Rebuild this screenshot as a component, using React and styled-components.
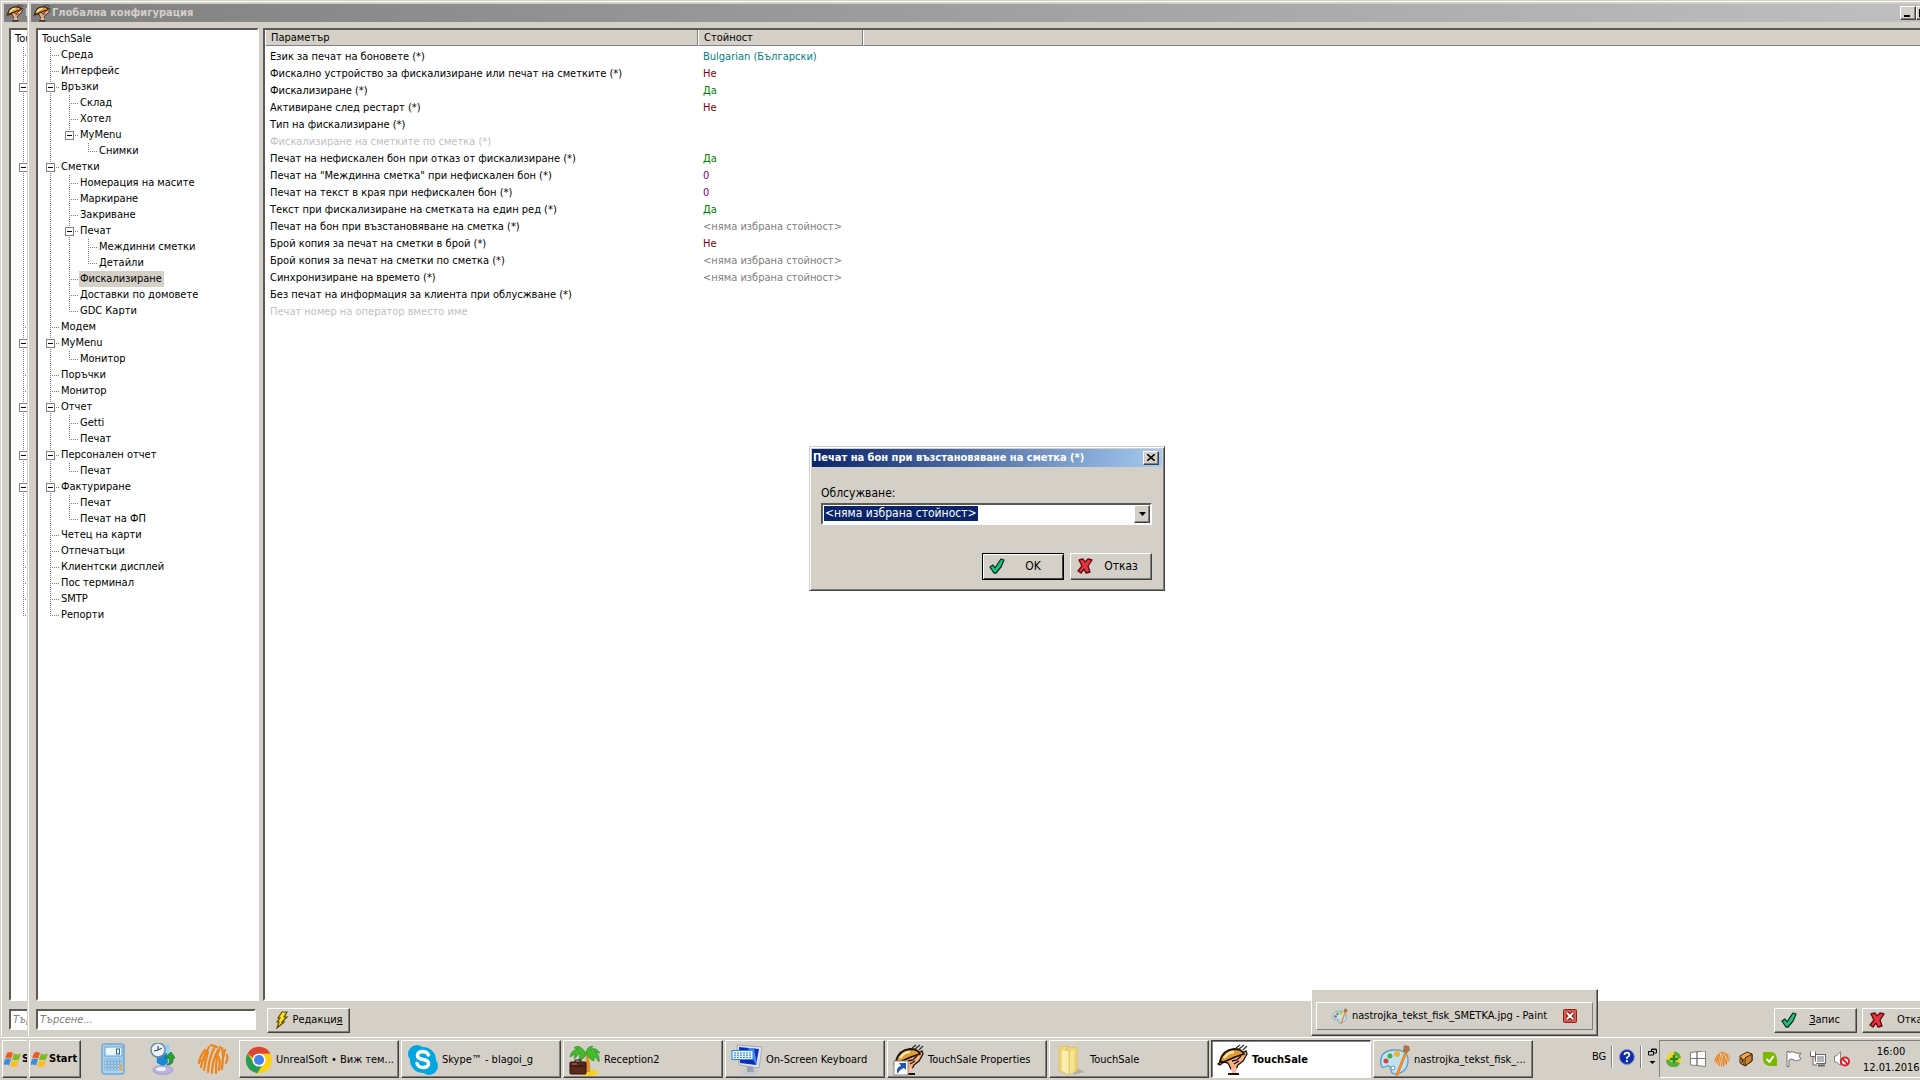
import * as React from 'react'
import styled, { createGlobalStyle, css } from 'styled-components'

const GlobalStyle = createGlobalStyle`
  * {
    box-sizing: border-box;
  }
  body {
    margin: 0;
    overflow: hidden;
    background: #d4d0c8;
    color: #000;
    font-family: 'DejaVu Sans Condensed', 'DejaVu Sans', sans-serif;
    font-size: 11px;
    line-height: 16px;
  }
  button, input, select {
    font: inherit;
    color: inherit;
  }
`

const raised = css`
  border: 1px solid;
  border-color: #fff #404040 #404040 #fff;
  box-shadow: inset -1px -1px 0 #808080;
`

const sunken = css`
  border: 2px solid;
  border-color: #5c5a56 #fff #fff #5c5a56;
  background: #fff;
`

const Desktop = styled.div`
  display: flex;
  min-height: 100vh;
  overflow: hidden;
`

const Sliver = styled.div`
  flex: 0 0 27px;
  display: flex;
  overflow: hidden;
`

const Screen = styled.div`
  flex: 0 0 ${(p) => (p.$narrow ? '300px' : '100vw')};
  display: flex;
  flex-direction: column;
`

const WindowArea = styled.div`
  position: relative;
  flex: 1;
  display: flex;
`

const Window = styled.section`
  flex: 0 0 calc(100% + 8px);
  display: flex;
  flex-direction: column;
  padding: 3px 2px 0 3px;
  border: 1px solid #d4d0c8;
  border-bottom: 0;
  box-shadow: inset 1px 1px 0 #fff;
`

const TitleBar = styled.header`
  display: flex;
  align-items: center;
  height: 18px;
  padding: 0 2px;
  background: linear-gradient(90deg, #808080, #c0c0c0);
  color: #d4d0c8;
`

const Title = styled.h1`
  flex: 1;
  margin: 0;
  padding-left: 1px;
  font-size: 11px;
  font-weight: bold;
  white-space: nowrap;
`

const CaptionButton = styled.button`
  ${raised}
  display: flex;
  align-items: center;
  justify-content: center;
  width: 16px;
  height: 14px;
  margin-left: ${(p) => (p.$apart ? '2px' : 0)};
  padding: 0;
  background: #d4d0c8;
  color: #000;
`

const Columns = styled.div`
  flex: 1;
  display: flex;
  gap: 4px;
  padding: 6px 5px 0;
`

const Side = styled.div`
  flex: 0 0 223px;
  display: flex;
  flex-direction: column;
`

const Main = styled.div`
  flex: 1;
  display: flex;
  flex-direction: column;
`

const Tree = styled.ul`
  ${sunken}
  flex: 1;
  margin: 0;
  padding: 1px 3px;
  list-style: none;
`

const TreeRow = styled.li`
  display: flex;
  height: 16px;
  white-space: nowrap;
`

const Guide = styled.svg`
  flex: none;
  width: 19px;
  height: 16px;
`

const TreeLabel = styled.span`
  padding: 0 2px 0 1px;
  background: ${(p) => (p.$selected ? '#d4d0c8' : 'transparent')};
`

const Footer = styled.div`
  display: flex;
  align-items: center;
  height: 35px;
  padding: ${(p) => p.$pad || 0};
`

const Search = styled.input`
  ${sunken}
  width: 220px;
  height: 21px;
  padding: 0 2px;
  font-style: italic;
  &::placeholder {
    color: #808080;
    opacity: 1;
  }
`

const GridBox = styled.div`
  ${sunken}
  flex: 1;
`

const Grid = styled.table`
  width: 100%;
  table-layout: fixed;
  border-collapse: separate;
  border-spacing: 0;
  text-align: left;
  white-space: nowrap;

  th {
    height: 16px;
    padding: 1px 5px 0;
    line-height: 14px;
    font-weight: normal;
    background: #d4d0c8;
    border: 1px solid;
    border-color: #d4d0c8 #808080 #808080 #fff;
    border-top: 0;
  }
  td {
    height: 17px;
    padding: 0 5px;
    line-height: 17px;
  }
  tbody tr:first-child td {
    height: 19px;
    padding-top: 2px;
  }
`

const Name = styled.td`
  color: ${(p) => (p.$disabled ? '#c0c0c0' : '#000')};
`

const valueColors = {
  lang: '#008080',
  no: '#800000',
  yes: '#008000',
  number: '#800080',
  empty: '#808080',
}

const Value = styled.td`
  color: ${(p) => valueColors[p.$kind] || '#000'};
`

const ActionButton = styled.button`
  ${raised}
  display: flex;
  align-items: center;
  width: 83px;
  height: 25px;
  padding: 0 4px 0 6px;
  background: #d4d0c8;
  white-space: nowrap;
  span {
    flex: 1;
    text-align: center;
  }
`

const Spacer = styled.div`
  flex: 1;
`

const Overlay = styled.div`
  position: absolute;
  inset: 0;
  display: flex;
  align-items: center;
  justify-content: center;
`

const Dialog = styled.section`
  width: 356px;
  padding: 2px;
  border: 1px solid;
  border-color: #d4d0c8 #404040 #404040 #d4d0c8;
  box-shadow: inset 1px 1px 0 #fff, inset -1px -1px 0 #808080;
  background: #d4d0c8;
`

const DialogTitle = styled.header`
  display: flex;
  align-items: center;
  height: 18px;
  padding: 0 3px 0 0;
  background: linear-gradient(90deg, #0a246a, #a6caf0);
  color: #fff;
`

const DialogForm = styled.form`
  padding: 18px 9px 8px;
  font-size: 12px;
`

const DialogLabel = styled.label`
  display: block;
  height: 18px;
`

const Combo = styled.div`
  ${sunken}
  display: flex;
  align-items: center;
  width: 331px;
  height: 22px;
  padding-left: 1px;
`

const ComboSelect = styled.select`
  appearance: none;
  height: 15px;
  padding: 0 1px;
  border: 0;
  background: #0a246a;
  color: #fff;
  line-height: 15px;
`

const ComboArrow = styled.span`
  ${raised}
  display: flex;
  align-items: center;
  justify-content: center;
  width: 16px;
  height: 18px;
  margin-left: auto;
  background: #d4d0c8;
`

const DialogButtons = styled.div`
  display: flex;
  justify-content: flex-end;
  gap: 6px;
  padding: 28px 1px 0 0;
`

const DialogButton = styled(ActionButton)`
  width: 82px;
  height: 27px;
  padding-right: 2px;
  ${(p) =>
    p.$primary &&
    css`
      border-color: #000;
      box-shadow: inset 1px 1px 0 #fff, inset -1px -1px 0 #404040;
    `}
`

const Taskbar = styled.footer`
  display: flex;
  height: 44px;
  padding: 3px 2px 2px;
  border-top: 1px solid #d4d0c8;
  box-shadow: inset 0 1px 0 #fff;
`

const StartButton = styled.button`
  ${raised}
  display: flex;
  align-items: center;
  width: 52px;
  height: 38px;
  padding: 0 1px;
  background: #d4d0c8;
  font-weight: bold;
`

const QuickLaunch = styled.nav`
  display: flex;
  gap: 18px;
  padding: 3px 10px 0 16px;
  height: 38px;
`

const IconLink = styled.a`
  display: block;
  width: 32px;
  height: 32px;
`

const Tasks = styled.nav`
  flex: 1;
  display: flex;
  gap: 2px;
`

const Task = styled.button`
  ${raised}
  flex: 1;
  min-width: 0;
  display: flex;
  align-items: center;
  gap: 3px;
  height: 38px;
  padding: 1px 4px 0 5px;
  background: #d4d0c8;
  white-space: nowrap;
  ${(p) =>
    p.$active &&
    css`
      border-color: #404040 #fff #fff #404040;
      box-shadow: inset 1px 1px 0 #808080;
      background: #fff;
      font-weight: bold;
    `}
`

const Tools = styled.div`
  display: flex;
  align-items: center;
  width: 126px;
  padding: 0 2px 4px 59px;
`

const Divider = styled.div`
  width: 2px;
  height: 22px;
  margin: 0 6px 0 5px;
  border-left: 1px solid #808080;
  border-right: 1px solid #fff;
`

const Tray = styled.div`
  display: flex;
  align-items: center;
  gap: 8px;
  width: 286px;
  height: 38px;
  padding-left: 6px;
  border: 1px solid;
  border-color: #808080 #fff #fff #808080;
`

const Clock = styled.time`
  width: 56px;
  margin-left: 5px;
  padding-top: 1px;
  text-align: center;
`

const Preview = styled.div`
  ${raised}
  position: absolute;
  right: 349px;
  bottom: 0;
  width: 287px;
  height: 47px;
  padding: 12px 4px 6px;
  background: #d4d0c8;
`

const PreviewItem = styled.div`
  display: flex;
  align-items: center;
  gap: 4px;
  height: 28px;
  padding: 0 15px;
  border: 1px solid;
  border-color: #fff #808080 #808080 #fff;
  white-space: nowrap;
`

const PreviewClose = styled.button`
  display: flex;
  width: 14px;
  height: 14px;
  margin-left: auto;
  padding: 0;
  border: 0;
  background: none;
`

/* ---- icons ---- */

const Cloche = ({ size }) => (
  <svg width={size} height={size} viewBox="0 0 32 32">
    <path d="M1 20q4-4 10-4l9-4 9-5 1 3-4 7-5 4-2 4h-5l-3-6-4-1-4 3z" fill="#f7b184" stroke="#1d1208" strokeWidth="1.300" />
    <path d="M3 17Q6 6 17 5q8 0 10 5l-9 3-9 4q-4 2-6 0z" fill="#e39a35" stroke="#1d1208" strokeWidth="1.800" />
    <path d="M7 14q4-6 10-6" stroke="#ffe9a8" strokeWidth="2.500" fill="none" />
    <path d="M15 17l5-1 4-4M17 20l5-3" stroke="#1d1208" strokeWidth="1.300" fill="none" />
    <path d="M14 24h6l-1 5h-4z" fill="#f7b9ac" />
    <path d="M11 29h11v2H11z" fill="#1d1208" />
    <path d="M19 4l4-3M22 5l5-4M26 6l4-4" stroke="#333" strokeWidth="1.300" />
  </svg>
)

const Check = () => (
  <svg width="16" height="16" viewBox="0 0 16 16">
    <path d="M1 9l3-2 2 3 6-9 3 1-3 7-5 6H5z" fill="#1fc584" stroke="#06301f" strokeWidth="1.300" strokeLinejoin="round" />
  </svg>
)

const Cross = () => (
  <svg width="16" height="16" viewBox="0 0 16 16">
    <path d="M2 2l4-1 2 3 3-3 4 1-4 6 2 6-4 1-2-4-3 4-3-2 4-5z" fill="#e8343c" stroke="#5a090e" strokeWidth="1.300" strokeLinejoin="round" />
  </svg>
)

const Bolt = () => (
  <svg width="16" height="18" viewBox="0 0 16 18">
    <path d="M8 1h5l-3 5h3L8 11h2l-7 6 2-6H3l3-4H4z" fill="#ffe21c" stroke="#5c4a00" strokeWidth="1.200" />
  </svg>
)

const Flag = () => (
  <svg width="18" height="18" viewBox="0 0 18 18">
    <path d="M3 3q3-2 6 0L7 9Q5 7 1 8.500z" fill="#ef5a28" />
    <path d="M10 3.500q3 2 7 0l-2 6q-3 1.500-7 0z" fill="#7fba26" />
    <path d="M1 9.500q3-2 6 0l-2 6q-3-2-6 0z" fill="#3b8ede" />
    <path d="M8 10.500q3 2 7 0l-2 6q-4 1-7-.500z" fill="#fdbf14" />
  </svg>
)

const Calculator = () => (
  <svg width="32" height="32" viewBox="0 0 32 32">
    <rect x="5" y="1" width="22" height="30" rx="2" fill="#a9d3f1" stroke="#4b8fc4" />
    <rect x="8" y="4" width="17" height="9" fill="#eaf6ff" stroke="#5e9fd0" />
    <rect x="19.500" y="6" width="3" height="5" fill="none" stroke="#36618a" />
    {[16, 19, 22, 25].map((y) =>
      [8, 11, 14, 17, 20, 23].map((x) => (
        <rect key={`${x}-${y}`} x={x} y={y} width="2" height="2" fill={x === 23 && y > 20 ? '#f0a030' : '#fff'} stroke={x === 23 && y > 20 ? '#f0a030' : '#3f83b9'} strokeWidth=".5" />
      ))
    )}
  </svg>
)

const Recovery = () => (
  <svg width="32" height="32" viewBox="0 0 32 32">
    <ellipse cx="16" cy="27" rx="10" ry="4.500" fill="#b9b5dc" stroke="#8c88b8" strokeWidth=".6" />
    <ellipse cx="14" cy="26" rx="5" ry="2" fill="#efeefa" />
    <path d="M8 4l14-3 2 18-7 4-8-3z" fill="#8ed3f4" />
    <path d="M10 13l10-3 1 10-5 3-6-3z" fill="#1f86d4" />
    <circle cx="11" cy="7" r="7" fill="#e9f4f8" stroke="#6d8a99" strokeWidth="1.500" />
    <path d="M11 3v4l-4 1M11 7l4-2" stroke="#333" fill="none" />
    <path d="M20 22q4-2 2-7h-4l6-6 4 6h-2q1 7-6 7z" fill="#29a52b" stroke="#0d6c18" strokeWidth=".7" />
  </svg>
)

const Swirl = ({ size }) => (
  <svg width={size} height={size} viewBox="0 0 32 32" fill="none" stroke="#ef8419" strokeWidth="2.200" strokeLinecap="round">
    <path d="M2 20Q3 13 8 7M4 24Q6 14 12 4M7 27Q9 16 11 9M4 18L9 17M11 29Q11 18 18 3M14 2L20 4M15 30Q15 18 21 7M19 30Q19 22 20 13L23 4M20 12Q24 16 22 27M25 26Q25 16 28 7M25 5Q27 14 25 24M29 20Q31 16 30 12" />
  </svg>
)

const Chrome = () => (
  <svg width="32" height="32" viewBox="0 0 32 32">
    <circle cx="16" cy="16" r="15" fill="#fcd116" />
    <path d="M3 8.500a15 15 0 0 1 26 0L16 9a7 7 0 0 0-6.500 5z" fill="#dd4436" />
    <path d="M3 8.500A15 15 0 0 0 14 31l6-10a7 7 0 0 1-10-2z" fill="#2a9d54" />
    <circle cx="16" cy="16" r="7.500" fill="#fff" />
    <circle cx="16" cy="16" r="5.700" fill="#4383f0" />
  </svg>
)

const SkypeIcon = () => (
  <svg width="32" height="32" viewBox="0 0 32 32">
    <circle cx="10" cy="10" r="9" fill="#00a6e2" />
    <circle cx="22" cy="22" r="9" fill="#00a6e2" />
    <circle cx="16" cy="16" r="13" fill="#00a6e2" />
    <path d="M21.500 11q-1.500-3.500-6-3.500-5 .5-5 4 0 3 5.500 4t5.500 4q0 4-5.500 4-4.500 0-6-4" fill="none" stroke="#fff" strokeWidth="3.500" strokeLinecap="round" />
  </svg>
)

const Palm = () => (
  <svg width="32" height="32" viewBox="0 0 32 32">
    <path d="M8 29q8-7 23-1-4 4-15 4z" fill="#f6d21f" />
    <path d="M18 9q4 8 3 19h-5q2-10 0-18z" fill="#d9962c" />
    <path d="M17 9Q10-1 5 4l4 1q-7 1-8 8l5-3-1 5 6-6-1 8q6-3 8-8 1 6 7 8l0-5q3 3 5 6 1-8-4-10l5 1q-5-7-10-3l3-4q-6 0-7 7z" fill="#46b82e" stroke="#1c8a1c" strokeWidth=".6" />
    <rect x="1" y="18" width="16" height="12" rx="1" fill="#5c2a1a" stroke="#2c110a" />
    <path d="M6 18v-2h6v2M1 22h16" stroke="#2c110a" fill="none" />
    <path d="M3 20h5" stroke="#b57a5c" />
  </svg>
)

const Screenboard = () => (
  <svg width="32" height="32" viewBox="0 0 32 32">
    <ellipse cx="19" cy="28" rx="9" ry="3" fill="#c3cad3" />
    <path d="M16 22h6l1 6h-7z" fill="#9aa6b5" />
    <path d="M6 1l25 2-3 21-20-3z" fill="#dfe5ec" stroke="#8794a6" strokeWidth=".7" />
    <path d="M8 3l20 2-3 16-16-2z" fill="#0d2fc0" />
    <path d="M17 4l6 .6L26 20l-1 1z" fill="#4b8bee" />
    <rect x="1" y="6.500" width="21" height="9" fill="#e8f3fc" stroke="#2c85cf" />
    <path d="M3 9h17M3 11.200h17M3 13.400h17" stroke="#2c85cf" strokeDasharray="2 1" />
  </svg>
)

const ShortcutCloche = () => (
  <svg width="32" height="32" viewBox="0 0 32 32">
    <Cloche size={32} />
    <rect x="1" y="17" width="14" height="14" fill="#fff" stroke="#8a8a8a" />
    <path d="M4 29q-1-6 4-7l-2-3 7 0v7l-2-2q-4 1-6 5z" fill="#1c5aa8" />
  </svg>
)

const Folder = () => (
  <svg width="32" height="32" viewBox="0 0 32 32">
    <path d="M20 23l10 5-12 3z" fill="#b3afa8" />
    <path d="M4 3l9-1v28l-9-3z" fill="#f3d978" stroke="#d9bd53" strokeWidth=".7" />
    <path d="M11 4l11-1v24l-8 3z" fill="#f0d673" stroke="#d9bd53" strokeWidth=".7" />
    <path d="M6 5l8 2v24l-8-4z" fill="#fbeeb0" stroke="#d9bd53" strokeWidth=".7" />
    <path d="M15 7l4-1v22l-4 2z" fill="#f8e594" />
  </svg>
)

const Palette = ({ size }) => (
  <svg width={size} height={size} viewBox="0 0 32 32">
    <path d="M2 21Q0 7 14 6q15-1 15 10 0 12-12 14-5 0-5-4 0-5-4-4-5 3-6-1z" fill="#bfe2f5" stroke="#5b9cc4" strokeWidth="1.300" />
    <circle cx="7" cy="17" r="2.500" fill="#d8433c" />
    <circle cx="11" cy="12" r="2.500" fill="#49ad3c" />
    <circle cx="18" cy="10" r="3" fill="#f0b323" />
    <circle cx="14" cy="24" r="2" fill="#fff" stroke="#5b9cc4" />
    <path d="M27 8L18 31" stroke="#ee8d2d" strokeWidth="3" strokeLinecap="round" />
    <path d="M25 1l5 1 1 4-4 4-3-3z" fill="#a8744a" />
  </svg>
)

const Help = () => (
  <svg width="16" height="16" viewBox="0 0 16 16">
    <circle cx="8" cy="8" r="7.500" fill="#0b2bb0" stroke="#7c8cc4" />
    <path d="M5.500 6q0-2.500 2.500-2.500T10.500 6Q10.500 7.300 8 8.500V10" fill="none" stroke="#fff" strokeWidth="1.700" />
    <circle cx="8" cy="12.200" r="1.100" fill="#fff" />
  </svg>
)

const RestoreArrows = () => (
  <svg width="9" height="18" viewBox="0 0 9 18">
    <path d="M3.500 3V1h5v4H6M.5 3.500h5V7h-5zM.5 3.500h5M3.500 1.500h5" fill="none" stroke="#000" />
    <path d="M1.500 13h6l-3 3z" />
  </svg>
)

const trayIcons = {
  Update: (
    <>
      <circle cx="8" cy="8" r="7.500" fill="#f3d52b" />
      <path d="M0 9a7.500 7.500 0 0 0 14 3.500l-3-2q-5 3-8-2zM8 .5a7 7 0 0 1 7 6.500l-3 1q-1-4-4-4z" fill="#56ac3c" />
      <path d="M8 4v8M4 8h8" stroke="#1c8a29" strokeWidth="2.500" />
    </>
  ),
  Windows: <path d="M.5 1.500l6.500-.8v6.800H.5zM7 .7L15.500 0v7.500H7zM.5 7.500H7v7L.5 14zM7 7.500h8.500v8L7 14.500z" fill="#fff" stroke="#77756f" strokeWidth=".9" />,
  Box: (
    <>
      <path d="M2 5l7-4 5 2v7l-7 5-5-3z" fill="#f0a948" stroke="#3a2208" />
      <path d="M7 7l7-4v7l-7 5z" fill="#c98230" stroke="#3a2208" />
      <path d="M3 7l3 7M6 8l-3 4M3 6l3 5" stroke="#3a2208" strokeWidth=".8" />
    </>
  ),
  Online: (
    <>
      <path d="M1 1h8q5 0 6 7v7H8Q1 14 1 8z" fill="#7ab800" />
      <path d="M4.500 8l3 3 4-6" fill="none" stroke="#fff" strokeWidth="2" />
    </>
  ),
  Alerts: <path d="M1 .5v15h2V9q3-2 5 0t7-1l-2-3 2-3q-3 1-6-.5T3 1.500V.5z" fill="#fff" stroke="#77756f" />,
  Network: (
    <>
      <path d="M5.500 3.500h10v9h-10z" fill="#b4b4b4" stroke="#666" />
      <path d="M6.500 4.500h8v7h-8z" fill="none" stroke="#fff" />
      <path d="M8 14.500h7" stroke="#666" strokeWidth="2" />
      <path d="M.5.500v5h5v-5M3 5v9h4" fill="#fff" stroke="#666" />
    </>
  ),
  Volume: (
    <>
      <path d="M.5 5h2l4-4.500v14L2.500 11h-2z" fill="#fff" stroke="#888" />
      <circle cx="11" cy="10.500" r="4" fill="#fff" stroke="#d8232a" strokeWidth="2" />
      <path d="M8 7.500l6 6" stroke="#d8232a" strokeWidth="2" />
    </>
  ),
}

const TrayIcon = ({ name }) => (
  <svg width="16" height="16" viewBox="0 0 16 16" role="img" aria-label={name}>
    {trayIcons[name]}
  </svg>
)

const RedClose = () => (
  <svg width="14" height="14" viewBox="0 0 14 14">
    <rect x=".5" y=".5" width="13" height="13" rx="1" fill="#dc5b4e" stroke="#8e2018" />
    <path d="M4 4l6 6M10 4l-6 6" stroke="#5a1a16" strokeWidth="4" />
    <path d="M4 4l6 6M10 4l-6 6" stroke="#fff" strokeWidth="2" />
  </svg>
)

/* ---- data ---- */

// guides: one letter per level
// t branch, e last branch, v line only, o blank, b/c branch with a box (c is the last one)
const treeItems = [
  ['', 'TouchSale'],
  ['t', 'Среда'],
  ['t', 'Интерфейс'],
  ['b', 'Връзки'],
  ['vt', 'Склад'],
  ['vt', 'Хотел'],
  ['vc', 'MyMenu'],
  ['voe', 'Снимки'],
  ['b', 'Сметки'],
  ['vt', 'Номерация на масите'],
  ['vt', 'Маркиране'],
  ['vt', 'Закриване'],
  ['vb', 'Печат'],
  ['vvt', 'Междинни сметки'],
  ['vve', 'Детайли'],
  ['vt', 'Фискализиране'],
  ['vt', 'Доставки по домовете'],
  ['ve', 'GDC Карти'],
  ['t', 'Модем'],
  ['b', 'MyMenu'],
  ['ve', 'Монитор'],
  ['t', 'Поръчки'],
  ['t', 'Монитор'],
  ['b', 'Отчет'],
  ['vt', 'Getti'],
  ['ve', 'Печат'],
  ['b', 'Персонален отчет'],
  ['ve', 'Печат'],
  ['b', 'Фактуриране'],
  ['vt', 'Печат'],
  ['ve', 'Печат на ФП'],
  ['t', 'Четец на карти'],
  ['t', 'Отпечатъци'],
  ['t', 'Клиентски дисплей'],
  ['t', 'Пос терминал'],
  ['t', 'SMTP'],
  ['e', 'Репорти'],
]

const none = '<няма избрана стойност>'

const params = [
  ['Език за печат на боновете (*)', 'Bulgarian (Български)', 'lang'],
  ['Фискално устройство за фискализиране или печат на сметките (*)', 'Не', 'no'],
  ['Фискализиране (*)', 'Да', 'yes'],
  ['Активиране след рестарт (*)', 'Не', 'no'],
  ['Тип на фискализиране (*)', ''],
  ['Фискализиране на сметките по сметка (*)', '', 'disabled'],
  ['Печат на нефискален бон при отказ от фискализиране (*)', 'Да', 'yes'],
  ['Печат на "Междинна сметка" при нефискален бон (*)', '0', 'number'],
  ['Печат на текст в края при нефискален бон (*)', '0', 'number'],
  ['Текст при фискализиране на сметката на един ред (*)', 'Да', 'yes'],
  ['Печат на бон при възстановяване на сметка (*)', none, 'empty'],
  ['Брой копия за печат на сметки в брой (*)', 'Не', 'no'],
  ['Брой копия за печат на сметки по сметка (*)', none, 'empty'],
  ['Синхронизиране на времето (*)', none, 'empty'],
  ['Без печат на информация за клиента при облусжване (*)', ''],
  ['Печат номер на оператор вместо име', '', 'disabled'],
]

const tasks = [
  ['UnrealSoft • Виж тем...', <Chrome />],
  ['Skype™ - blagoi_g', <SkypeIcon />],
  ['Reception2', <Palm />],
  ['On-Screen Keyboard', <Screenboard />],
  ['TouchSale Properties', <ShortcutCloche />],
  ['TouchSale', <Folder />],
  ['TouchSale', <Cloche size={32} />, true],
  ['nastrojka_tekst_fisk_...', <Palette size={32} />],
]

/* ---- parts ---- */

function TreeGuide({ kind }) {
  const box = kind === 'b' || kind === 'c'
  const half = kind === 'e' || kind === 'c'
  return (
    <Guide viewBox="0 0 19 16">
      {kind !== 'o' && (
        <path d={half ? 'M9.500 0V8' : 'M9.500 0V16'} stroke="#808080" strokeDasharray="1 1" />
      )}
      {kind !== 'o' && kind !== 'v' && (
        <path d="M9 8.500H18" stroke="#808080" strokeDasharray="1 1" />
      )}
      {box && <rect x="5.500" y="4.500" width="8" height="8" fill="#fff" stroke="#808080" />}
      {box && <path d="M7 8.500h5" stroke="#000" />}
    </Guide>
  )
}

function ConfigTree({ guidesOnly }) {
  return (
    <Tree>
      {treeItems.map(([guides, label], i) => (
        <TreeRow key={i}>
          {guides.split('').map((g, n) => (
            <TreeGuide key={n} kind={g} />
          ))}
          {(!guidesOnly || i === 0) && (
            <TreeLabel $selected={label === 'Фискализиране'}>{label}</TreeLabel>
          )}
        </TreeRow>
      ))}
    </Tree>
  )
}

function SidePanel({ guidesOnly }) {
  return (
    <Side>
      <ConfigTree guidesOnly={guidesOnly} />
      <Footer $pad="2px 0 0">
        <Search placeholder="Търсене..." aria-label="Търсене" />
      </Footer>
    </Side>
  )
}

function Start() {
  return (
    <StartButton>
      <Flag />
      Start
    </StartButton>
  )
}

// left edge of the first monitor, only its frame shows
function BackScreen() {
  return (
    <Screen $narrow>
      <WindowArea>
        <Window>
          <TitleBar>
            <Cloche size={18} />
            <Title as="div">Глобална конфигурация</Title>
          </TitleBar>
          <Columns>
            <SidePanel guidesOnly />
          </Columns>
        </Window>
      </WindowArea>
      <Taskbar>
        <Start />
      </Taskbar>
    </Screen>
  )
}

function ParamGrid() {
  return (
    <GridBox>
      <Grid>
        <colgroup>
          <col style={{ width: 433 }} />
          <col style={{ width: 165 }} />
          <col />
        </colgroup>
        <thead>
          <tr>
            <th>Параметър</th>
            <th>Стойност</th>
            <th aria-label="empty" />
          </tr>
        </thead>
        <tbody>
          {params.map(([name, value, kind]) => (
            <tr key={name}>
              <Name $disabled={kind === 'disabled'}>{name}</Name>
              <Value $kind={kind}>{value}</Value>
              <td />
            </tr>
          ))}
        </tbody>
      </Grid>
    </GridBox>
  )
}

function RestoreDialog() {
  return (
    <Overlay>
      <Dialog role="dialog" aria-labelledby="dialog-title">
        <DialogTitle>
          <Title as="h2" id="dialog-title">
            Печат на бон при възстановяване на сметка (*)
          </Title>
          <CaptionButton aria-label="Close">
            <svg width="8" height="7" viewBox="0 0 8 7">
              <path d="M0 0l8 7M8 0L0 7" stroke="#000" strokeWidth="1.600" />
            </svg>
          </CaptionButton>
        </DialogTitle>
        <DialogForm>
          <DialogLabel htmlFor="service">Облсужване:</DialogLabel>
          <Combo>
            <ComboSelect id="service">
              <option>{none}</option>
            </ComboSelect>
            <ComboArrow>
              <svg width="7" height="4" viewBox="0 0 7 4">
                <path d="M0 0h7L3.500 4z" />
              </svg>
            </ComboArrow>
          </Combo>
          <DialogButtons>
            <DialogButton type="button" $primary>
              <Check />
              <span>OK</span>
            </DialogButton>
            <DialogButton type="button">
              <Cross />
              <span>Отказ</span>
            </DialogButton>
          </DialogButtons>
        </DialogForm>
      </Dialog>
    </Overlay>
  )
}

function FrontScreen() {
  return (
    <Screen>
      <WindowArea>
        <Window>
          <TitleBar>
            <Cloche size={18} />
            <Title>Глобална конфигурация</Title>
            <CaptionButton aria-label="Minimize">
              <svg width="10" height="8" viewBox="0 0 10 8">
                <path d="M1 6h6v2H1z" />
              </svg>
            </CaptionButton>
            <CaptionButton aria-label="Maximize">
              <svg width="10" height="9" viewBox="0 0 10 9">
                <path d="M.5 1h8v7h-8z" fill="none" stroke="#000" />
                <path d="M0 0h9v2H0z" />
              </svg>
            </CaptionButton>
            <CaptionButton aria-label="Close" $apart>
              <svg width="8" height="7" viewBox="0 0 8 7">
                <path d="M0 0l8 7M8 0L0 7" stroke="#000" strokeWidth="1.600" />
              </svg>
            </CaptionButton>
          </TitleBar>
          <Columns>
            <SidePanel />
            <Main>
              <ParamGrid />
              <Footer $pad="3px 2px 0 4px">
                <ActionButton>
                  <Bolt />
                  <span>
                    Редакци<u>я</u>
                  </span>
                </ActionButton>
                <Spacer />
                <ActionButton>
                  <Check />
                  <span>
                    <u>З</u>апис
                  </span>
                </ActionButton>
                <Footer $pad="0 0 0 5px">
                  <ActionButton>
                    <Cross />
                    <span>Отказ</span>
                  </ActionButton>
                </Footer>
              </Footer>
            </Main>
          </Columns>
        </Window>
        <RestoreDialog />
        <Preview>
          <PreviewItem>
            <Palette size={16} />
            nastrojka_tekst_fisk_SMETKA.jpg - Paint
            <PreviewClose aria-label="Close">
              <RedClose />
            </PreviewClose>
          </PreviewItem>
        </Preview>
      </WindowArea>
      <Taskbar>
        <Start />
        <QuickLaunch>
          <IconLink href="#calculator" aria-label="Calculator">
            <Calculator />
          </IconLink>
          <IconLink href="#recovery" aria-label="Recovery">
            <Recovery />
          </IconLink>
          <IconLink href="#aton" aria-label="Aton">
            <Swirl size={32} />
          </IconLink>
        </QuickLaunch>
        <Tasks>
          {tasks.map(([label, icon, active], i) => (
            <Task key={i} $active={active}>
              {icon}
              {label}
            </Task>
          ))}
        </Tasks>
        <Tools>
          BG
          <Divider />
          <Help />
          <Divider />
          <RestoreArrows />
        </Tools>
        <Tray>
          <TrayIcon name="Update" />
          <TrayIcon name="Windows" />
          <Swirl size={16} />
          <TrayIcon name="Box" />
          <TrayIcon name="Online" />
          <TrayIcon name="Alerts" />
          <TrayIcon name="Network" />
          <TrayIcon name="Volume" />
          <Clock>
            16:00
            <br />
            12.01.2016
          </Clock>
        </Tray>
      </Taskbar>
    </Screen>
  )
}

export default function App() {
  return (
    <Desktop>
      <GlobalStyle />
      <Sliver aria-hidden="true">
        <BackScreen />
      </Sliver>
      <FrontScreen />
    </Desktop>
  )
}
